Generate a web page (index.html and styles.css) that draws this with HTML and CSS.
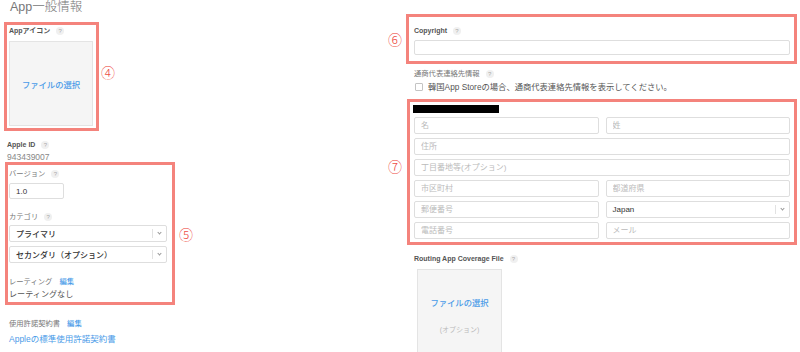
FILE: index.html
```html
<!DOCTYPE html>
<html lang="ja">
<head>
  <meta charset="UTF-8" />
  <meta name="viewport" content="width=device-width, initial-scale=1.0"/>
  <title>App一般情報</title>
  <link rel="stylesheet" href="styles.css">
</head>
<body>

<div class="page">

  <!-- left column -->
  <div class="col-left">
    <h2 class="title">App一般情報</h2>

    <div class="mark-row mark-4">
      <div class="hl box-icon">
        <div class="label strong">Appアイコン <span class="help">?</span></div>
        <div class="filebox icon-file">
          <span class="file-link">ファイルの選択</span>
        </div>
      </div>
      <span class="num">④</span>
    </div>

    <div class="field apple-id">
      <div class="label strong">Apple ID <span class="help">?</span></div>
      <div class="value">943439007</div>
    </div>

    <div class="mark-row mark-5">
      <div class="hl box-version">
        <div class="label">バージョン <span class="help">?</span></div>
        <input class="text version-input" type="text" value="1.0">

        <div class="label cat-label">カテゴリ <span class="help">?</span></div>
        <div class="select">
          <span class="sel-text">プライマリ</span>
          <span class="sel-arrow"></span>
        </div>
        <div class="select second">
          <span class="sel-text">セカンダリ（オプション）</span>
          <span class="sel-arrow"></span>
        </div>

        <div class="label rating-label">レーティング <a class="edit">編集</a></div>
        <div class="rating-value">レーティングなし</div>
      </div>
      <span class="num">⑤</span>
    </div>

    <div class="field license">
      <div class="label">使用許諾契約書 <a class="edit">編集</a></div>
      <a class="license-link">Appleの標準使用許諾契約書</a>
    </div>
  </div>

  <!-- right column -->
  <div class="col-right">
    <div class="mark-row mark-6">
      <span class="num">⑥</span>
      <div class="hl box-copy">
        <div class="label strong">Copyright <span class="help">?</span></div>
        <input class="text wide" type="text">
      </div>
    </div>

    <div class="plain trade">
      <div class="label">通商代表連絡先情報 <span class="help">?</span></div>
      <label class="check-row"><span class="check"></span>韓国App Storeの場合、通商代表連絡先情報を表示してください。</label>
    </div>

    <div class="mark-row mark-7">
      <span class="num">⑦</span>
      <div class="hl box-contact">
        <div class="redact"></div>
        <div class="contact-grid">
          <input class="text" type="text" placeholder="名">
          <input class="text" type="text" placeholder="姓">
          <input class="text full" type="text" placeholder="住所">
          <input class="text full" type="text" placeholder="丁目番地等(オプション)">
          <input class="text" type="text" placeholder="市区町村">
          <input class="text" type="text" placeholder="都道府県">
          <input class="text" type="text" placeholder="郵便番号">
          <div class="select country">
            <span class="sel-text">Japan</span>
            <span class="sel-arrow"></span>
          </div>
          <input class="text" type="text" placeholder="電話番号">
          <input class="text" type="text" placeholder="メール">
        </div>
      </div>
    </div>

    <div class="plain routing">
      <div class="label strong">Routing App Coverage File <span class="help">?</span></div>
      <div class="filebox route-file">
        <span class="file-link">ファイルの選択</span>
        <span class="optional">(オプション)</span>
      </div>
    </div>
  </div>

</div>

</body>
</html>
```

FILE: styles.css
```css
body {
  margin: 0;
  background: #fff;
  font-family: "Liberation Sans", "Noto Sans CJK JP", sans-serif;
  font-size: 8px;
  color: #555;
  overflow: hidden;
}
.page {
  display: grid;
  grid-template-columns: 388px 1fr;
  height: 352px;
}
.col-left {
  padding-left: 4px;
}
.col-right {
  padding: 14px 3px 0 0;
}
.title {
  margin: 0 0 7px 6px;
  font-size: 12.5px;
  line-height: 15px;
  font-weight: 300;
  color: #777;
}

/* highlighted boxes and circled numbers */
.mark-row {
  display: flex;
  align-items: center;
}
.hl {
  border: 3px solid #f4837c;
  box-sizing: border-box;
}
.num {
  font-family: "Noto Sans CJK JP", sans-serif;
  font-size: 14px;
  line-height: 14px;
  font-weight: 300;
  color: #ee4c44;
}
.mark-4 .num {
  margin: 0 0 10px 2px;
}
.mark-5 .num {
  margin-left: 4px;
}
.mark-6 .num,
.mark-7 .num {
  width: 18px;
  flex: none;
}
.mark-7 .num {
  margin-bottom: 12px;
}

/* labels */
.label {
  line-height: 10px;
  font-size: 7.3px;
  color: #777;
  white-space: nowrap;
}
.label.strong {
  font-size: 7px;
  font-weight: bold;
  color: #555;
}
.help {
  display: inline-block;
  width: 8px;
  height: 8px;
  margin-left: 4px;
  border-radius: 50%;
  background: #f0f0f0;
  color: #aaa;
  font-size: 6px;
  font-weight: normal;
  line-height: 8px;
  text-align: center;
  vertical-align: 0;
}
.edit {
  margin-left: 5px;
  color: #4a9be8;
  font-weight: 500;
}

/* inputs */
.text {
  display: block;
  box-sizing: border-box;
  height: 17px;
  margin: 0;
  padding: 0 6px;
  border: 1px solid #dedede;
  border-radius: 2px;
  font-family: inherit;
  font-size: 8px;
  color: #333;
  outline: none;
}
.text::placeholder {
  color: #bbb;
}
.select {
  position: relative;
  box-sizing: border-box;
  height: 17px;
  padding-left: 6px;
  border: 1px solid #dedede;
  border-radius: 2px;
  display: flex;
  align-items: center;
  font-size: 8px;
  font-weight: 500;
  color: #333;
}
.sel-arrow {
  position: absolute;
  right: 0;
  top: 3px;
  width: 13px;
  height: 9px;
  border-left: 1px solid #e2e2e2;
}
.sel-arrow::after {
  content: "";
  position: absolute;
  left: 5px;
  top: 2px;
  width: 2px;
  height: 2px;
  border-right: 1px solid #999;
  border-bottom: 1px solid #999;
  transform: rotate(45deg);
}

/* file boxes */
.filebox {
  box-sizing: border-box;
  background: #f5f5f5;
  border: 1px solid #e4e4e4;
  display: flex;
  flex-direction: column;
  align-items: center;
}
.file-link {
  color: #4a9be8;
  font-size: 8.3px;
  font-weight: 500;
}
.icon-file {
  width: 84px;
  height: 85px;
  margin-top: 5px;
  justify-content: center;
}

/* left column blocks */
.box-icon {
  width: 95px;
  height: 109px;
  padding: 1px 3px 2px 2px;
}
.apple-id {
  margin: 9px 0 0 3px;
}
.value {
  margin-top: 2px;
  line-height: 10px;
  font-size: 8.5px;
  color: #888;
}
.box-version {
  width: 170px;
  height: 143px;
  margin-left: 1px;
  padding: 4px 5px 2px 1px;
}
.version-input {
  width: 55px;
  height: 16px;
  margin-top: 4px;
}
.cat-label {
  margin: 13px 0 3px;
}
.select.second {
  margin-top: 4px;
}
.rating-label {
  margin-top: 14px;
}
.rating-value {
  margin-top: 3px;
  line-height: 10px;
  font-size: 8.1px;
  color: #555;
}
.license {
  margin: 14px 0 0 5px;
}
.license-link {
  display: block;
  margin-top: 5px;
  line-height: 10px;
  font-size: 8.5px;
  color: #4a9be8;
}

/* right column blocks */
.box-copy {
  flex: 1;
  height: 50px;
  padding: 9px 4px 0 5px;
}
.wide {
  width: 100%;
  height: 15px;
  margin-top: 4px;
}
.plain {
  margin-left: 26px;
}
.trade {
  margin-top: 5px;
}
.check-row {
  display: flex;
  align-items: center;
  margin-top: 3px;
  line-height: 10px;
  font-size: 8.3px;
  color: #555;
}
.check {
  width: 8px;
  height: 8px;
  margin: 0 5px 0 1px;
  box-sizing: border-box;
  border: 1px solid #c4c4c4;
  border-radius: 1px;
}
.mark-7 {
  margin-top: 7px;
}
.box-contact {
  flex: 1;
  margin-left: 1px;
  padding: 3px 4px 3px 3px;
}
.redact {
  width: 86px;
  height: 8px;
  background: #000;
}
.contact-grid {
  display: grid;
  grid-template-columns: 1fr 1fr;
  column-gap: 7px;
  row-gap: 4px;
  margin: 4px 0 0 1px;
}
.contact-grid .full {
  grid-column: 1 / 3;
}
.select.country {
  font-weight: normal;
}
.routing {
  margin-top: 9px;
}
.route-file {
  width: 85px;
  height: 95px;
  margin: 5px 0 0 3px;
  padding-top: 26px;
}
.optional {
  margin-top: 16px;
  font-size: 7px;
  color: #bbb;
}
```
